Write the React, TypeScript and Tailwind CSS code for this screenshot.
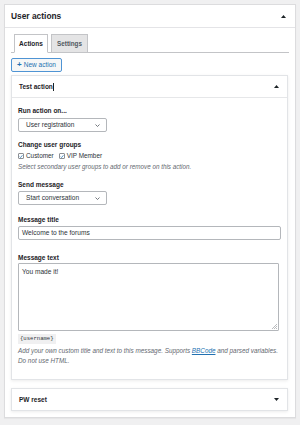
import React from 'react';

const Triangle: React.FC<{ up?: boolean }> = ({ up }) => (
  <svg width="5" height="3" viewBox="0 0 5 3" className="fill-[#1d2327]">
    <path d={up ? 'M0 3L2.5 0L5 3Z' : 'M0 0L5 0L2.5 3Z'} />
  </svg>
);

const Chevron = () => (
  <svg width="5" height="3" viewBox="0 0 5 3" fill="none" className="stroke-[#50575e]">
    <path d="M0.5 0.5L2.5 2.5L4.5 0.5" strokeWidth={0.8} />
  </svg>
);

const Label: React.FC<{ children: React.ReactNode; className?: string }> = ({ children, className = '' }) => (
  <div className={`text-[6.5px] leading-[9px] font-bold text-[#1d2327] ${className}`}>{children}</div>
);

const Select: React.FC<{ value: string; className?: string }> = ({ value, className = '' }) => (
  <div className={`flex items-center justify-between w-[89px] h-[14px] pl-[7px] pr-[6px] border border-[#b4b7bb] rounded-[2px] bg-white text-[6.6px] text-[#2c3338] ${className}`}>
    <span>{value}</span>
    <Chevron />
  </div>
);

const Checkbox: React.FC<{ label: string }> = ({ label }) => (
  <div className="flex items-center gap-[2px]">
    <span className="flex items-center justify-center w-[6px] h-[6px] border border-[#8c8f94] rounded-[1px] bg-white">
      <svg width="5" height="5" viewBox="0 0 5 5" fill="none" className="stroke-[#2271b1]">
        <path d="M0.8 2.6L2 3.8L4.3 0.9" strokeWidth={0.9} />
      </svg>
    </span>
    <span className="text-[6.4px] leading-[8px] text-[#2c3338]">{label}</span>
  </div>
);

export default function App() {
  return (
    <div className="min-h-screen bg-[#f0f0f1] p-[4px] font-['Liberation_Sans',Arial,sans-serif]">
      <div className="w-[292px] border border-[#dcdcde] bg-white shadow-[0_1px_1px_rgba(0,0,0,0.04)]">
        <div className="flex items-center justify-between h-[23px] pl-[6px] pr-[9px] border-b border-[#e4e4e7]">
          <h2 className="text-[8.4px] font-semibold text-[#1d2327]">User actions</h2>
          <Triangle up />
        </div>

        <div className="px-[6px] pt-[6px] pb-[6px]">
          <div className="flex items-end gap-[3px] pl-[3px] border-b border-[#c3c4c7]">
            <div className="-mb-px h-[19px] w-[34px] flex items-center justify-center border border-[#c3c4c7] border-b-white bg-white text-[6.5px] font-bold text-[#1d2327]">
              Actions
            </div>
            <div className="-mb-px h-[19px] w-[37px] flex items-center justify-center border border-[#c3c4c7] bg-[#e4e4e5] text-[6.3px] font-bold text-[#50575e]">
              Settings
            </div>
          </div>

          <button className="mt-[5px] flex items-center justify-center gap-[2px] h-[14px] w-[51px] px-[3px] border border-[#4f94d4] rounded-[2px] bg-[#f6f7f7] text-[6.5px] leading-none whitespace-nowrap text-[#2271b1]">
            <span className="text-[8px] font-bold leading-none">+</span>
            <span>New action</span>
          </button>

          <div className="mt-[3px] w-[277px] border border-[#e2e4e7] bg-white shadow-[0_1px_3px_rgba(0,0,0,0.08)]">
            <div className="flex items-center justify-between h-[22px] pl-[7px] pr-[8px] border-b border-[#e6e7e9]">
              <div className="flex items-center">
                <span className="text-[6.5px] font-bold text-[#1d2327]">Test action</span>
                <span className="ml-[0.5px] w-px h-[8px] bg-[#1d2327]" />
              </div>
              <Triangle up />
            </div>

            <div className="px-[6px] pt-[8px] pb-[13px]">
              <Label>Run action on...</Label>
              <Select value="User registration" className="mt-[3px]" />

              <Label className="mt-[8px]">Change user groups</Label>
              <div className="mt-[3px] flex items-center gap-[5px]">
                <Checkbox label="Customer" />
                <Checkbox label="VIP Member" />
              </div>
              <p className="mt-[2px] text-[6.3px] leading-[9px] italic text-[#646970]">
                Select secondary user groups to add or remove on this action.
              </p>

              <Label className="mt-[9px]">Send message</Label>
              <Select value="Start conversation" className="mt-[2px]" />

              <Label className="mt-[10px]">Message title</Label>
              <div className="mt-[2px] flex items-center h-[14px] w-full pl-[3px] border border-[#b4b7bb] rounded-[2px] text-[6.6px] text-[#2c3338]">
                Welcome to the forums
              </div>

              <Label className="mt-[13px]">Message text</Label>
              <div className="relative mt-[1px] h-[68px] w-[261px] border border-[#b4b7bb] rounded-[1px] px-[3px] pt-[3px] text-[6.6px] leading-[9px] text-[#2c3338]">
                You made it!
                <svg width="5" height="5" viewBox="0 0 5 5" className="absolute right-[1px] bottom-[1px] stroke-[#8c8f94]" fill="none">
                  <path d="M5 0L0 5M5 2L2 5M5 4L4 5" strokeWidth={0.6} />
                </svg>
              </div>

              <div className="mt-[3px] flex w-fit items-center h-[10px] px-[2px] bg-[#f0f0f1] font-['Liberation_Mono',monospace] text-[5.6px] text-[#2c3338]">
                {'{username}'}
              </div>
              <p className="mt-[2px] text-[6.35px] leading-[10px] italic text-[#646970]">
                Add your own custom title and text to this message. Supports{' '}
                <span className="underline text-[#2271b1]">BBCode</span> and parsed variables.
                <br />
                Do not use HTML.
              </p>
            </div>
          </div>

          <div className="mt-[8px] w-[277px] flex items-center justify-between h-[23px] pl-[7px] pr-[8px] border border-[#e2e4e7] bg-white shadow-[0_1px_3px_rgba(0,0,0,0.08)]">
            <span className="text-[6.5px] font-bold text-[#1d2327]">PW reset</span>
            <Triangle />
          </div>
        </div>
      </div>
    </div>
  );
}
